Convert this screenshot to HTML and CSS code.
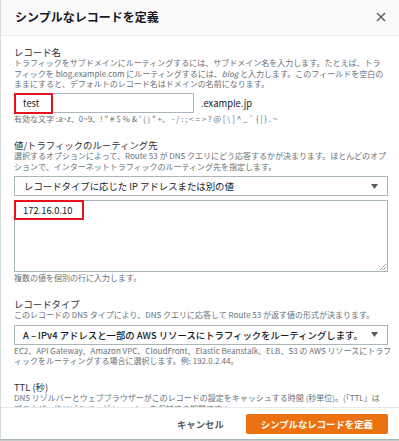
FILE: index.html
```html
<!DOCTYPE html>
<html lang="ja">
<head>
<meta charset="utf-8">
<title>シンプルなレコードを定義</title>
<link rel="stylesheet" href="styles.css">
</head>
<body>
<div class="modal">
  <header class="modal-header">
    <h1 class="title">シンプルなレコードを定義</h1>
    <button class="close" aria-label="閉じる">
      <svg width="10" height="10" viewBox="0 0 10 10"><path d="M1 1L9 9M9 1L1 9" stroke="#545b64" stroke-width="1.4" fill="none"/></svg>
    </button>
  </header>

  <div class="modal-body">
    <section class="field">
      <div class="label">レコード名</div>
      <p class="desc">トラフィックをサブドメインにルーティングするには、サブドメイン名を入力します。たとえば、トラ<br>フィックを blog.example.com にルーティングするには、<i>blog</i> と入力します。このフィールドを空白の<br>ままにすると、デフォルトのレコード名はドメインの名前になります。</p>
      <div class="row">
        <div class="input">test<span class="mark mark-name"></span></div>
        <span class="suffix">.example.jp</span>
      </div>
      <p class="hint">有効な文字 :a~z、0~9、! " # $ % &amp; ' ( ) * +、 - / : ; &lt; = &gt; ? @ [ \ ] ^ _ ` { | } . ~</p>
    </section>

    <section class="field">
      <div class="label">値/トラフィックのルーティング先</div>
      <p class="desc">選択するオプションによって、Route 53 が DNS クエリにどう応答するかが決まります。ほとんどのオプ<br>ションで、インターネットトラフィックのルーティング先を指定します。</p>
      <div class="select">
        <span>レコードタイプに応じた IP アドレスまたは別の値</span>
        <svg class="caret" width="7" height="5" viewBox="0 0 7 5"><path d="M0 0H7L3.5 5Z" fill="#545b64"/></svg>
      </div>
      <div class="textarea">172.16.0.10<span class="mark mark-value"></span>
        <svg class="grip" width="7" height="7" viewBox="0 0 7 7"><path d="M7 1L1 7M7 4L4 7" stroke="#7d8998" stroke-width="0.8"/></svg>
      </div>
      <p class="hint">複数の値を個別の行に入力します。</p>
    </section>

    <section class="field">
      <div class="label">レコードタイプ</div>
      <p class="desc">このレコードの DNS タイプにより、DNS クエリに応答して Route 53 が返す値の形式が決まります。</p>
      <div class="select strong">
        <span>A – IPv4 アドレスと一部の AWS リソースにトラフィックをルーティングします。</span>
        <svg class="caret" width="7" height="5" viewBox="0 0 7 5"><path d="M0 0H7L3.5 5Z" fill="#545b64"/></svg>
      </div>
      <p class="hint">EC2、API Gateway、Amazon VPC、CloudFront、Elastic Beanstalk、ELB、S3 の AWS リソースにトラフ<br>ィックをルーティングする場合に選択します。例: 192.0.2.44。</p>
    </section>

    <section class="field">
      <div class="label">TTL (秒)</div>
      <p class="desc">DNS リゾルバーとウェブブラウザーがこのレコードの設定をキャッシュする時間 (秒単位)。(「TTL」は<br>ブラウザーやリゾルバーがキャッシュを保持する期間です。)</p>
    </section>
  </div>

  <footer class="modal-footer">
    <button class="btn-link">キャンセル</button>
    <button class="btn-primary">シンプルなレコードを定義</button>
  </footer>
</div>
</body>
</html>
```

FILE: styles.css
```css
* { box-sizing: border-box; }

html, body {
  margin: 0;
  padding: 0;
  background: #c7cccc;
}

body {
  font-family: "Noto Sans CJK JP", "Noto Sans", sans-serif;
  color: #16191f;
  width: 399px;
  height: 441px;
  overflow: hidden;
}

.modal {
  width: 399px;
  height: 440px;
  background: #ffffff;
  border-left: 1px solid #d5dbdb;
  border-bottom: 1px solid #aab7b8;
  display: flex;
  flex-direction: column;
}

.modal-header {
  height: 36px;
  flex: none;
  background: #fafafa;
  border-bottom: 1px solid #e6eaea;
  display: flex;
  align-items: center;
  justify-content: space-between;
  padding: 0 13px 2px 14px;
}

.title {
  margin: 0;
  font-size: 12px;
  font-weight: 700;
  line-height: 16px;
  color: #16191f;
}

.close {
  border: 0;
  background: none;
  padding: 0;
  width: 10px;
  height: 10px;
  display: flex;
}

.modal-body {
  flex: 1;
  overflow: hidden;
  padding: 10px 11px 0 13px;
  display: flex;
  flex-direction: column;
  gap: 14px;
}

.field {
  display: flex;
  flex-direction: column;
}

.label {
  font-size: 9.4px;
  line-height: 12px;
  color: #2b3036;
}

.desc, .hint {
  margin: 0;
  font-size: 8px;
  line-height: 10.7px;
  color: #687078;
  white-space: nowrap;
}

.hint { margin-top: 1px; }

.row {
  display: flex;
  align-items: center;
  gap: 7px;
  margin-top: 3px;
}

.input {
  position: relative;
  width: 180px;
  height: 20px;
  border: 1px solid #aab7b8;
  padding: 0 8px;
  font-size: 9.4px;
  line-height: 18px;
  color: #16191f;
}

.suffix {
  font-size: 9.4px;
  color: #16191f;
}

.mark {
  position: absolute;
  border: 2px solid #e3141b;
}

.mark-name {
  left: -1px;
  top: -1px;
  width: 39px;
  height: 21px;
}

.select {
  margin-top: 4px;
  height: 20px;
  border: 1px solid #aab7b8;
  display: flex;
  align-items: center;
  justify-content: space-between;
  padding: 0 9px 0 9px;
  font-size: 9.4px;
  line-height: 18px;
  color: #16191f;
}

.select.strong { font-weight: 500; padding-left: 8px; }

.caret { flex: none; }

.textarea {
  position: relative;
  margin-top: 4px;
  height: 72px;
  border: 1px solid #aab7b8;
  padding: 3px 8px;
  font-size: 9.4px;
  line-height: 12px;
  color: #16191f;
}

.mark-value {
  left: -1px;
  top: -1px;
  width: 70px;
  height: 20px;
}

.grip {
  position: absolute;
  right: 1px;
  bottom: 1px;
}

.modal-footer {
  flex: none;
  height: 32px;
  border-top: 1px solid #e6eaea;
  display: flex;
  align-items: center;
  justify-content: flex-end;
  gap: 8px;
  padding: 0 11px 0 0;
}

.btn-link {
  border: 0;
  background: none;
  font-family: inherit;
  font-size: 9.4px;
  font-weight: 700;
  color: #545b64;
  padding: 0 14px;
  height: 20px;
}

.btn-primary {
  border: 0;
  background: #ec7211;
  border-radius: 2px;
  font-family: inherit;
  font-size: 9.4px;
  font-weight: 700;
  color: #ffffff;
  height: 20px;
  padding: 0 15px;
}
```
